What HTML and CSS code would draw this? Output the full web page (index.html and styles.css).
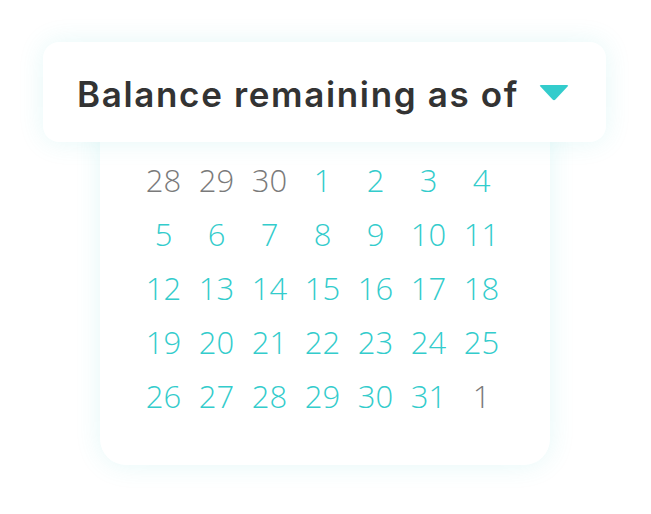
FILE: index.html
```html
<!DOCTYPE html>
<html>
<head>
<meta charset="utf-8">
<link rel="stylesheet" href="styles.css">
</head>
<body>
<div class="stage">
  <div class="header">
    <span class="title">Balance remaining as of</span>
    <svg class="caret" width="30" height="16" viewBox="0 0 30 16"><path d="M2 0 H28 Q30 0 28.6 1.6 L16.4 14.6 Q15 16 13.6 14.6 L1.4 1.6 Q0 0 2 0 Z" fill="#33cccc"/></svg>
  </div>
  <div class="calendar">
    <div class="grid">
      <span class="d muted">28</span><span class="d muted">29</span><span class="d muted">30</span><span class="d">1</span><span class="d">2</span><span class="d">3</span><span class="d">4</span>
      <span class="d">5</span><span class="d">6</span><span class="d">7</span><span class="d">8</span><span class="d">9</span><span class="d">10</span><span class="d">11</span>
      <span class="d">12</span><span class="d">13</span><span class="d">14</span><span class="d">15</span><span class="d">16</span><span class="d">17</span><span class="d">18</span>
      <span class="d">19</span><span class="d">20</span><span class="d">21</span><span class="d">22</span><span class="d">23</span><span class="d">24</span><span class="d">25</span>
      <span class="d">26</span><span class="d">27</span><span class="d">28</span><span class="d">29</span><span class="d">30</span><span class="d">31</span><span class="d muted">1</span>
    </div>
  </div>
</div>
</body>
</html>
```
FILE: styles.css
```css
html, body {
  margin: 0;
  padding: 0;
  background: #ffffff;
  width: 651px;
  height: 514px;
  overflow: hidden;
}
.stage {
  display: flex;
  flex-direction: column;
  padding-top: 42px;
}
.header {
  position: relative;
  z-index: 2;
  margin-left: 43px;
  width: 563px;
  height: 100px;
  box-sizing: border-box;
  background: #fff;
  border-radius: 16px;
  box-shadow: 0 0 26px rgba(51, 204, 204, 0.13);
  display: flex;
  align-items: center;
  justify-content: space-between;
  padding: 4px 37px 0 34px;
}
.title {
  font-family: "Inter", "Noto Sans", sans-serif;
  font-weight: 600;
  font-size: 35px;
  color: #333333;
  letter-spacing: 1.65px;
  white-space: nowrap;
}
.caret {
  display: block;
  margin-top: -2px;
}
.calendar {
  position: relative;
  z-index: 1;
  margin-top: -12px;
  margin-left: 100px;
  width: 450px;
  box-sizing: border-box;
  background: #fff;
  border-radius: 0 0 26px 26px;
  box-shadow: 0 0 26px rgba(51, 204, 204, 0.13);
  padding: 23px 42px 42px 37px;
}
.grid {
  display: grid;
  grid-template-columns: repeat(7, 53px);
  grid-auto-rows: 54px;
}
.d {
  display: flex;
  align-items: center;
  justify-content: center;
  font-family: "Open Sans", "Lato", sans-serif;
  font-weight: 300;
  font-size: 31px;
  color: #33cccc;
}
.d.muted {
  color: #7a7a7a;
}
```
